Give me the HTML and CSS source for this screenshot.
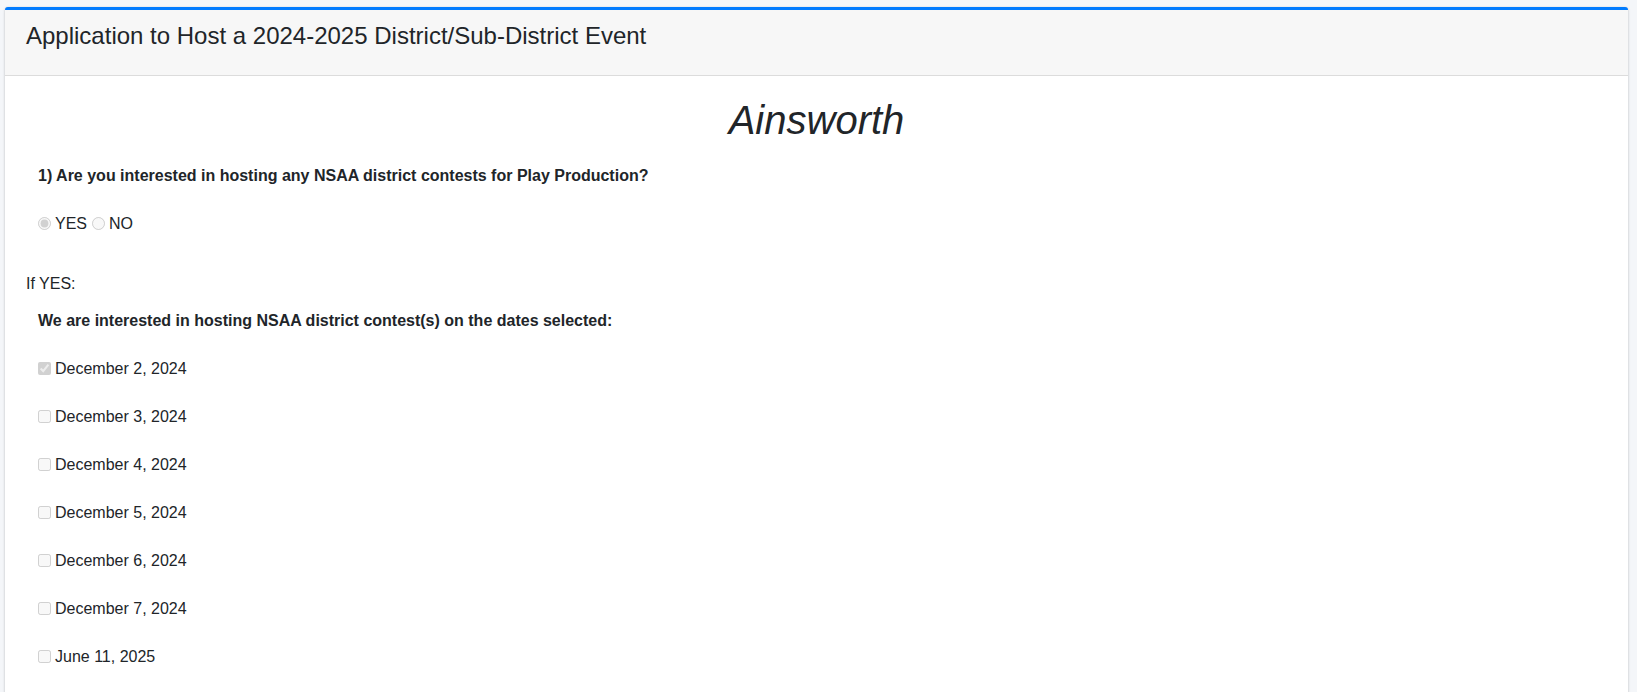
FILE: index.html
```html
<!DOCTYPE html>
<html lang="en">
<head>
<meta charset="utf-8">
<title>Application to Host a 2024-2025 District/Sub-District Event</title>
<link rel="stylesheet" href="styles.css">
</head>
<body>
<div class="card">
  <div class="card-header">
    <h3 class="card-title">Application to Host a 2024-2025 District/Sub-District Event</h3>
  </div>
  <div class="card-body">
    <h1 class="school">Ainsworth</h1>
    <div class="question">
      <p class="q">1) Are you interested in hosting any NSAA district contests for Play Production?</p>
      <div class="radios">
        <label class="opt"><input type="radio" name="host" checked disabled>YES</label>
        <label class="opt"><input type="radio" name="host" disabled>NO</label>
      </div>
    </div>
    <p class="ifyes">If YES:</p>
    <div class="question dates-q">
      <p class="q">We are interested in hosting NSAA district contest(s) on the dates selected:</p>
      <ul class="dates">
        <li><label class="opt"><input type="checkbox" checked disabled>December 2, 2024</label></li>
        <li><label class="opt"><input type="checkbox" disabled>December 3, 2024</label></li>
        <li><label class="opt"><input type="checkbox" disabled>December 4, 2024</label></li>
        <li><label class="opt"><input type="checkbox" disabled>December 5, 2024</label></li>
        <li><label class="opt"><input type="checkbox" disabled>December 6, 2024</label></li>
        <li><label class="opt"><input type="checkbox" disabled>December 7, 2024</label></li>
        <li><label class="opt"><input type="checkbox" disabled>June 11, 2025</label></li>
      </ul>
    </div>
  </div>
</div>
</body>
</html>
```

FILE: styles.css
```css
html, body {
  margin: 0;
  padding: 0;
}
body {
  background: #f4f6f9;
  font-family: "Liberation Sans", Arial, sans-serif;
  font-size: 16px;
  line-height: 1.5;
  color: #212529;
  padding: 7px 9px 0 5px;
}
.card {
  background: #fff;
  border-top: 3px solid #007bff;
  border-radius: 3px 3px 0 0;
  box-shadow: 0 0 1px rgba(0,0,0,.125), 0 1px 3px rgba(0,0,0,.2);
  min-height: 700px;
}
.card-header {
  background: #f7f7f7;
  border-bottom: 1px solid #dcdcdc;
  padding: 12px 21px 24px;
}
.card-title {
  margin: 0;
  font-size: 24px;
  font-weight: 400;
  line-height: 1.2;
}
.card-body {
  padding: 20px 21px;
}
.school {
  margin: 0;
  text-align: center;
  font-style: italic;
  font-weight: 400;
  font-size: 40px;
  line-height: 1.2;
}
.question {
  padding-left: 12px;
}
.q {
  margin: 20px 0 0;
  font-weight: 700;
}
.radios {
  display: flex;
  gap: 5px;
  margin-top: 24px;
}
.opt {
  display: flex;
  align-items: center;
  height: 24px;
}
.opt input {
  width: 13px;
  height: 13px;
  margin: 0 4px 0 0;
}
.ifyes {
  margin: 36px 0 0;
}
.dates-q .q {
  margin-top: 13px;
}
.dates {
  list-style: none;
  margin: 24px 0 0;
  padding: 0;
  display: flex;
  flex-direction: column;
  gap: 24px;
}
```
